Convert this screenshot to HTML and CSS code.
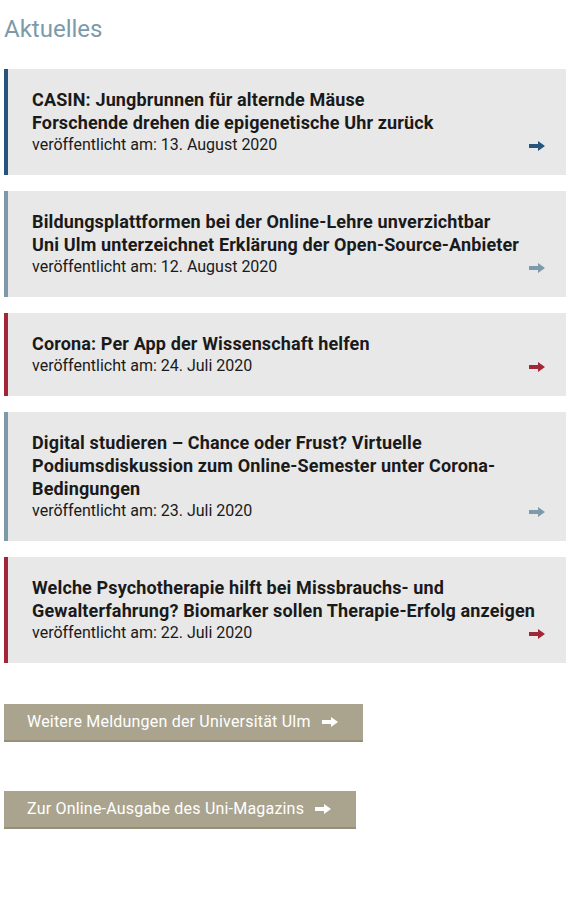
FILE: index.html
```html
<!DOCTYPE html>
<html lang="de">
<head>
<meta charset="utf-8">
<title>Aktuelles</title>
<link rel="stylesheet" href="styles.css">
</head>
<body>
<section class="news">
  <h2 class="news-heading">Aktuelles</h2>
  <div class="news-list">
    <a class="news-item c-blue" href="#">
      <div class="news-title">CASIN: Jungbrunnen für alternde Mäuse<br>Forschende drehen die epigenetische Uhr zurück</div>
      <div class="news-meta"><span>veröffentlicht am: 13. August 2020</span><svg class="arrow" viewBox="0 0 16 10" width="16" height="10"><path d="M0 3h9V0l7 5-7 5V7H0z" fill="currentColor"/></svg></div>
    </a>
    <a class="news-item c-grey" href="#">
      <div class="news-title">Bildungsplattformen bei der Online-Lehre unverzichtbar<br>Uni Ulm unterzeichnet Erklärung der Open-Source-Anbieter</div>
      <div class="news-meta"><span>veröffentlicht am: 12. August 2020</span><svg class="arrow" viewBox="0 0 16 10" width="16" height="10"><path d="M0 3h9V0l7 5-7 5V7H0z" fill="currentColor"/></svg></div>
    </a>
    <a class="news-item c-red" href="#">
      <div class="news-title">Corona: Per App der Wissenschaft helfen</div>
      <div class="news-meta"><span>veröffentlicht am: 24. Juli 2020</span><svg class="arrow" viewBox="0 0 16 10" width="16" height="10"><path d="M0 3h9V0l7 5-7 5V7H0z" fill="currentColor"/></svg></div>
    </a>
    <a class="news-item c-grey" href="#">
      <div class="news-title">Digital studieren – Chance oder Frust? Virtuelle Podiumsdiskussion zum Online-Semester unter Corona-Bedingungen</div>
      <div class="news-meta"><span>veröffentlicht am: 23. Juli 2020</span><svg class="arrow" viewBox="0 0 16 10" width="16" height="10"><path d="M0 3h9V0l7 5-7 5V7H0z" fill="currentColor"/></svg></div>
    </a>
    <a class="news-item c-red" href="#">
      <div class="news-title">Welche Psychotherapie hilft bei Missbrauchs- und Gewalterfahrung? Biomarker sollen Therapie-Erfolg anzeigen</div>
      <div class="news-meta"><span>veröffentlicht am: 22. Juli 2020</span><svg class="arrow" viewBox="0 0 16 10" width="16" height="10"><path d="M0 3h9V0l7 5-7 5V7H0z" fill="currentColor"/></svg></div>
    </a>
  </div>
  <div class="buttons">
    <a class="btn" href="#">Weitere Meldungen der Universität Ulm<svg class="btn-arrow" viewBox="0 0 16 10" width="16" height="10"><path d="M0 3h9V0l7 5-7 5V7H0z" fill="currentColor"/></svg></a>
    <a class="btn" href="#">Zur Online-Ausgabe des Uni-Magazins<svg class="btn-arrow" viewBox="0 0 16 10" width="16" height="10"><path d="M0 3h9V0l7 5-7 5V7H0z" fill="currentColor"/></svg></a>
  </div>
</section>
</body>
</html>
```
FILE: styles.css
```css
html, body {
  margin: 0;
  padding: 0;
  background: #fff;
}
body {
  font-family: Roboto, "Liberation Sans", sans-serif;
  color: #1a1a1a;
}
.news {
  padding: 0 1px 0 4px;
}
.news-heading {
  margin: 0;
  padding: 14px 0 25px;
  font-size: 24px;
  line-height: 30px;
  font-weight: 400;
  color: #7d9aaa;
}
.news-list {
  display: flex;
  flex-direction: column;
  gap: 16px;
}
.news-item {
  display: block;
  background: #e8e8e8;
  border-left: 4px solid #7d9aaa;
  padding: 19px 21px 19px 24px;
  text-decoration: none;
  color: #1a1a1a;
}
.news-title {
  font-size: 18px;
  line-height: 23px;
  font-weight: 700;
  letter-spacing: 0.14px;
}
.news-meta {
  display: flex;
  justify-content: space-between;
  align-items: center;
  font-size: 16px;
  line-height: 22px;
  font-weight: 400;
  color: #1a1a1a;
}
.arrow {
  display: block;
  margin-top: 2px;
}
.c-blue { border-left-color: #26547c; }
.c-blue .arrow { color: #26547c; }
.c-grey { border-left-color: #7d9aaa; }
.c-grey .arrow { color: #7d9aaa; }
.c-red { border-left-color: #a32638; }
.c-red .arrow { color: #a32638; }

.buttons {
  display: flex;
  flex-direction: column;
  align-items: flex-start;
  gap: 49px;
  padding-top: 41px;
}
.btn {
  display: inline-flex;
  align-items: center;
  gap: 11px;
  height: 38px;
  box-sizing: border-box;
  padding: 0 25px 0 23px;
  background: #aaa48f;
  border-bottom: 2px solid #96907b;
  color: #fff;
  font-size: 16px;
  line-height: 20px;
  letter-spacing: 0.2px;
  text-decoration: none;
}
.btn-arrow {
  display: block;
  color: #fff;
}
```
